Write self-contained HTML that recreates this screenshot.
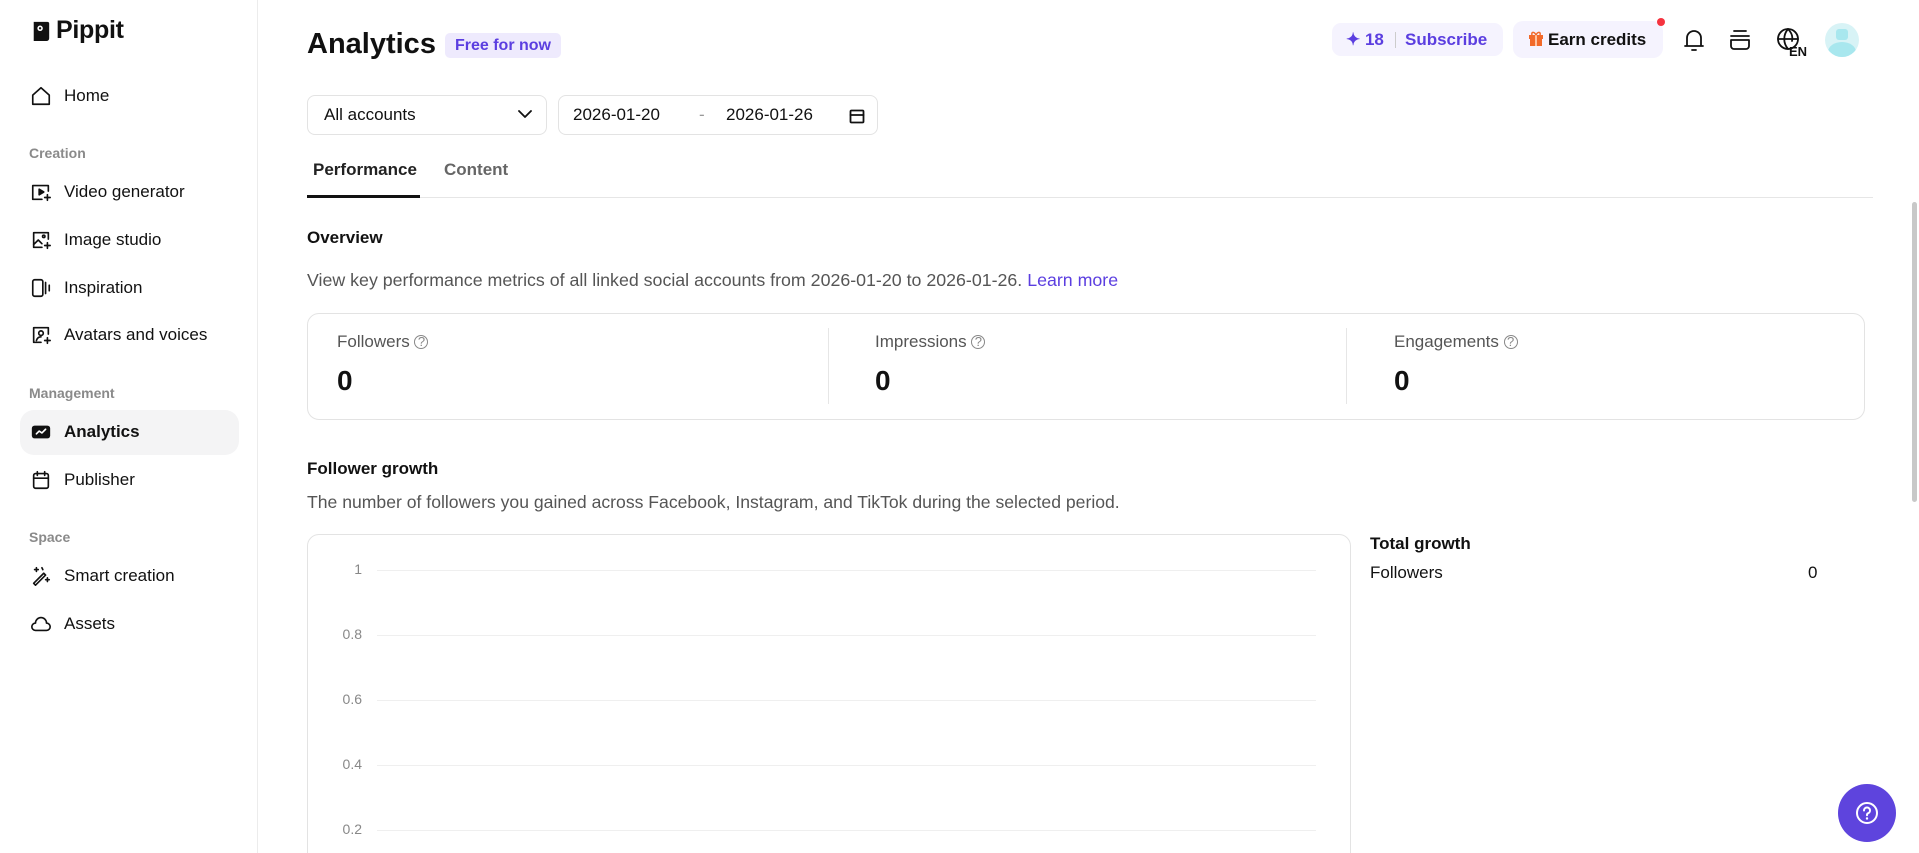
<!DOCTYPE html>
<html><head><meta charset="utf-8"><style>
*{box-sizing:border-box;margin:0;padding:0}
html,body{width:1919px;height:853px;overflow:hidden}
body{background:#fff;font-family:"Liberation Sans",sans-serif;color:#111;position:relative}
.abs{position:absolute}
.side{position:absolute;left:0;top:0;width:258px;height:853px;border-right:1px solid #ececec}
.nav{position:absolute;left:30px;display:flex;align-items:center;font-size:17px;color:#111;height:24px}
.nav svg{width:22px;height:22px;margin-right:12px;fill:none;stroke:#111;stroke-width:1.8;stroke-linejoin:round;stroke-linecap:round}
.sec{position:absolute;left:29px;font-size:14px;color:#8a8a8a;font-weight:bold}
.box{position:absolute;border:1px solid #e3e3e3;border-radius:10px}
.grid{position:absolute;left:377px;width:939px;height:1px;background:#efefef}
.gl{position:absolute;left:320px;width:42px;text-align:right;font-size:14px;color:#888}
.ic{fill:none;stroke:#111;stroke-width:1.8;stroke-linecap:round;stroke-linejoin:round}
</style></head><body>
<div class="side">
  <svg class="abs" style="left:31px;top:20px" width="20" height="22" viewBox="0 0 22 24"><path d="M3 2h15a2 2 0 0 1 2 2v16a3 3 0 0 1-3 3H3z" fill="#111"/><circle cx="10" cy="9" r="3" fill="#fff"/><circle cx="10" cy="9" r="1.3" fill="#111"/></svg>
  <div class="abs" style="left:56px;top:16px;font-size:25px;font-weight:bold;letter-spacing:-0.3px">Pippit</div>

  <div class="nav" style="top:84px"><svg viewBox="0 0 24 24"><path d="M3 11l9-8 9 8v10H3z"/></svg>Home</div>
  <div class="sec" style="top:145px">Creation</div>
  <div class="nav" style="top:180px"><svg viewBox="0 0 24 24"><path d="M20 11V5H3v15h10"/><path d="M10 9l5 3-5 3z" fill="#111"/><path d="M19 15v6M16 18h6"/></svg>Video generator</div>
  <div class="nav" style="top:228px"><svg viewBox="0 0 24 24"><path d="M20 11V4H4v16h9"/><path d="M4 17l5-5 4 4"/><circle cx="15" cy="8" r="1.3"/><path d="M19 15v6M16 18h6"/></svg>Image studio</div>
  <div class="nav" style="top:276px"><svg viewBox="0 0 24 24"><rect x="3" y="3" width="11" height="18" rx="2"/><path d="M17 6v12M21 9v6"/></svg>Inspiration</div>
  <div class="nav" style="top:323px"><svg viewBox="0 0 24 24"><path d="M20 11V4H4v16h8"/><circle cx="12" cy="10" r="2.5"/><path d="M7 18c1-3 3-4 5-4"/><path d="M19 15v6M16 18h6"/></svg>Avatars and voices</div>
  <div class="sec" style="top:385px">Management</div>
  <div class="abs" style="left:20px;top:410px;width:219px;height:45px;background:#f4f4f5;border-radius:14px"></div>
  <div class="nav" style="top:420px;font-weight:bold"><svg viewBox="0 0 24 24" style="stroke:none"><rect x="2" y="5" width="20" height="14" rx="3" fill="#111"/><path d="M7 14l3-3 3 2 4-4" stroke="#fff" stroke-width="1.8" fill="none"/></svg>Analytics</div>
  <div class="nav" style="top:468px"><svg viewBox="0 0 24 24"><rect x="4" y="5" width="16" height="16" rx="2"/><path d="M4 10h16M8 3v4M16 3v4"/></svg>Publisher</div>
  <div class="sec" style="top:529px">Space</div>
  <div class="nav" style="top:564px"><svg viewBox="0 0 24 24"><path d="M4 20L15 9l2 2L6 22z"/><path d="M7 3v4M5 5h4M19 14v4M17 16h4M13 3l1 2"/></svg>Smart creation</div>
  <div class="nav" style="top:612px"><svg viewBox="0 0 24 24"><path d="M6 19a4 4 0 0 1 0-8 6 6 0 0 1 12 0 4 4 0 0 1 0 8z"/></svg>Assets</div>
</div>

<div class="abs" style="left:307px;top:28px;font-size:29px;font-weight:bold">Analytics</div>
<div class="abs" style="left:445px;top:33px;width:116px;height:25px;background:#eeeafd;border-radius:5px;color:#5b3ee0;font-size:16px;font-weight:bold;text-align:center;line-height:25px">Free for now</div>

<div class="abs" style="left:1332px;top:23px;width:171px;height:33px;background:#f5f3fe;border-radius:9px;color:#5b3ee0;font-weight:bold;font-size:17px;line-height:33px">
  <span class="abs" style="left:14px">✦ 18</span><span class="abs" style="left:63px;top:9px;width:1px;height:16px;background:#ccc"></span><span class="abs" style="left:73px">Subscribe</span></div>
<div class="abs" style="left:1513px;top:21px;width:150px;height:37px;background:#f5f3fe;border-radius:10px;font-weight:bold;font-size:17px;line-height:37px;padding-left:15px">
  <svg width="16" height="17" viewBox="0 0 16 17" style="vertical-align:-2px;margin-right:4px"><rect x="1" y="5" width="14" height="4" fill="#f26a2a"/><rect x="2" y="9" width="12" height="7" fill="#f26a2a"/><rect x="7" y="5" width="2" height="11" fill="#ffc29f"/><path d="M8 5C6 1 3 2 4 5M8 5c2-4 5-3 4 0" stroke="#f26a2a" fill="none" stroke-width="1.5"/></svg>Earn credits</div>
<div class="abs" style="left:1657px;top:18px;width:8px;height:8px;border-radius:50%;background:#f5333f"></div>
<svg class="abs" style="left:1681px;top:26px" width="26" height="28" viewBox="0 0 26 28"><path class="ic" d="M4 20h18M6 20v-8a7 7 0 0 1 14 0v8M11 24h4"/></svg>
<svg class="abs" style="left:1727px;top:26px" width="26" height="28" viewBox="0 0 26 28"><path class="ic" d="M7 5h12M4 10h18M4 14h18v6a3 3 0 0 1-3 3H7a3 3 0 0 1-3-3z"/></svg>
<svg class="abs" style="left:1775px;top:26px" width="34" height="32" viewBox="0 0 34 32"><circle class="ic" cx="13" cy="13" r="10"/><path class="ic" d="M3 13h20M13 3c-5 6-5 14 0 20M13 3c4 4 5 8 4 12"/><text x="14" y="30" font-family="Liberation Sans" font-weight="bold" font-size="13" fill="#111">EN</text></svg>
<div class="abs" style="left:1825px;top:23px;width:34px;height:34px;border-radius:50%;background:#d8f3f6;overflow:hidden"><div class="abs" style="left:11px;top:6px;width:12px;height:11px;background:#a8e7ee;border-radius:3px"></div><div class="abs" style="left:3px;top:19px;width:28px;height:20px;background:#a8e7ee;border-radius:50%"></div></div>

<div class="box" style="left:307px;top:95px;width:240px;height:40px;border-radius:8px;font-size:17px;line-height:38px;padding-left:16px">All accounts<svg class="abs" style="right:14px;top:13px" width="14" height="10" viewBox="0 0 14 10"><path class="ic" d="M1 2l6 6 6-6" stroke-width="1.6"/></svg></div>
<div class="box" style="left:558px;top:95px;width:320px;height:40px;border-radius:8px;font-size:17px;line-height:38px">
  <span class="abs" style="left:14px">2026-01-20</span><span class="abs" style="left:140px;color:#999">-</span><span class="abs" style="left:167px">2026-01-26</span>
  <svg class="abs" style="left:290px;top:12px" width="16" height="16" viewBox="0 0 16 16"><rect class="ic" x="1.5" y="2.5" width="13" height="12" rx="1" stroke-width="1.3"/><path class="ic" d="M1.5 7h13" stroke-width="1.3"/></svg></div>

<div class="abs" style="left:313px;top:160px;font-size:17px;font-weight:bold;color:#222">Performance</div>
<div class="abs" style="left:444px;top:160px;font-size:17px;font-weight:bold;color:#666">Content</div>
<div class="abs" style="left:307px;top:197px;width:1566px;height:1px;background:#e6e6e6"></div>
<div class="abs" style="left:307px;top:195px;width:113px;height:3px;background:#111"></div>

<div class="abs" style="left:307px;top:228px;font-size:17px;font-weight:bold">Overview</div>
<div class="abs" style="left:307px;top:270px;font-size:17.8px;color:#555">View key performance metrics of all linked social accounts from 2026-01-20 to 2026-01-26. <span style="color:#5b3ee0">Learn more</span></div>

<div class="box" style="left:307px;top:313px;width:1558px;height:107px;border-radius:12px"></div>
<div class="abs" style="left:828px;top:328px;width:1px;height:76px;background:#e6e6e6"></div>
<div class="abs" style="left:1346px;top:328px;width:1px;height:76px;background:#e6e6e6"></div>
<div class="abs" style="left:337px;top:332px;font-size:17px;color:#555">Followers <span style="font-size:13px;border:1px solid #888;border-radius:50%;display:inline-block;width:14px;height:14px;line-height:12px;text-align:center;color:#888;vertical-align:1px">?</span></div>
<div class="abs" style="left:875px;top:332px;font-size:17px;color:#555">Impressions <span style="font-size:13px;border:1px solid #888;border-radius:50%;display:inline-block;width:14px;height:14px;line-height:12px;text-align:center;color:#888;vertical-align:1px">?</span></div>
<div class="abs" style="left:1394px;top:332px;font-size:17px;color:#555">Engagements <span style="font-size:13px;border:1px solid #888;border-radius:50%;display:inline-block;width:14px;height:14px;line-height:12px;text-align:center;color:#888;vertical-align:1px">?</span></div>
<div class="abs" style="left:337px;top:365px;font-size:28px;font-weight:bold">0</div>
<div class="abs" style="left:875px;top:365px;font-size:28px;font-weight:bold">0</div>
<div class="abs" style="left:1394px;top:365px;font-size:28px;font-weight:bold">0</div>

<div class="abs" style="left:307px;top:459px;font-size:17px;font-weight:bold">Follower growth</div>
<div class="abs" style="left:307px;top:492px;font-size:17.6px;color:#555">The number of followers you gained across Facebook, Instagram, and TikTok during the selected period.</div>

<div class="abs" style="left:307px;top:534px;width:1044px;height:319px;overflow:hidden"><div class="box" style="left:0;top:0;width:1044px;height:360px;border-radius:12px"></div></div>
<div class="grid" style="top:570px"></div><div class="gl" style="top:561px">1</div>
<div class="grid" style="top:635px"></div><div class="gl" style="top:626px">0.8</div>
<div class="grid" style="top:700px"></div><div class="gl" style="top:691px">0.6</div>
<div class="grid" style="top:765px"></div><div class="gl" style="top:756px">0.4</div>
<div class="grid" style="top:830px"></div><div class="gl" style="top:821px">0.2</div>

<div class="abs" style="left:1370px;top:534px;font-size:17px;font-weight:bold">Total growth</div>
<div class="abs" style="left:1370px;top:563px;font-size:17px">Followers</div>
<div class="abs" style="left:1808px;top:563px;font-size:17px">0</div>

<div class="abs" style="left:1838px;top:784px;width:58px;height:58px;border-radius:50%;background:#5e44dd"><svg class="abs" style="left:17px;top:17px" width="24" height="24" viewBox="0 0 24 24"><circle cx="12" cy="12" r="10" fill="none" stroke="#fff" stroke-width="2"/><path d="M9 9.5a3 3 0 1 1 4 2.8c-1 .4-1 1-1 2" fill="none" stroke="#fff" stroke-width="2" stroke-linecap="round"/><circle cx="12" cy="17.5" r="1.2" fill="#fff"/></svg></div>
<div class="abs" style="left:1912px;top:202px;width:5px;height:300px;border-radius:3px;background:#c8c8c8"></div>
</body></html>
